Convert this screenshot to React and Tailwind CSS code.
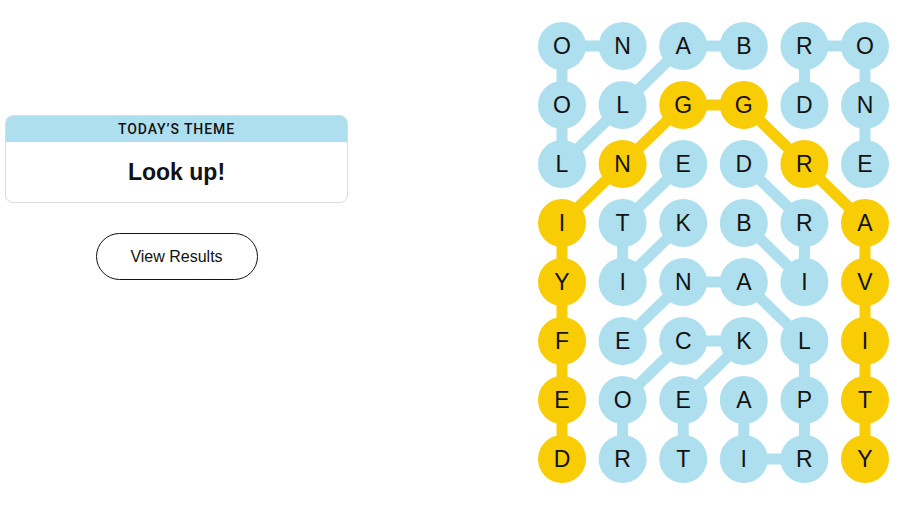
import React from 'react';

const GRID = [
  'ONABRO',
  'OLGGDN',
  'LNEDRE',
  'ITKBRA',
  'YINAIV',
  'FECKLI',
  'EOEAPT',
  'DRTIRY',
];

// words as [row, col] paths
const WORDS = [
  { path: [[0, 3], [0, 2], [1, 1], [2, 0], [1, 0], [0, 0], [0, 1]] },
  { path: [[1, 4], [0, 4], [0, 5], [1, 5], [2, 5]] },
  { path: [[3, 2], [4, 1], [3, 1], [2, 2]] },
  { path: [[3, 3], [4, 4], [3, 4], [2, 3]] },
  { path: [[6, 3], [7, 3], [7, 4], [6, 4], [5, 4], [4, 3], [4, 2], [5, 1]] },
  { path: [[7, 1], [6, 1], [5, 2], [5, 3], [6, 2], [7, 2]] },
  {
    spangram: true,
    path: [[7, 0], [6, 0], [5, 0], [4, 0], [3, 0], [2, 1], [1, 2], [1, 3], [2, 4], [3, 5], [4, 5], [5, 5], [6, 5], [7, 5]],
  },
];

const BLUE = '#aedfee';
const YELLOW = '#f8cd05';

const cx = (c) => 32 + c * 60.6;
const cy = (r) => 46 + r * 59;

function Board() {
  const fill = {};
  WORDS.forEach((w) => w.path.forEach(([r, c]) => (fill[`${r}-${c}`] = w.spangram ? YELLOW : BLUE)));

  return (
    <svg width="370" height="506" viewBox="0 0 370 506" className="shrink-0">
      {WORDS.map((w, i) => (
        <polyline
          key={i}
          points={w.path.map(([r, c]) => `${cx(c)},${cy(r)}`).join(' ')}
          fill="none"
          stroke={w.spangram ? YELLOW : BLUE}
          strokeWidth="11"
          strokeLinejoin="round"
        />
      ))}
      {GRID.map((row, r) =>
        row.split('').map((ch, c) => (
          <g key={`${r}-${c}`}>
            <circle cx={cx(c)} cy={cy(r)} r="24" fill={fill[`${r}-${c}`] || BLUE} />
            <text
              x={cx(c)}
              y={cy(r) + 8.3}
              textAnchor="middle"
              fontSize="23"
              fill="#121212"
              style={{ fontFamily: '"Liberation Sans", Arial, sans-serif' }}
            >
              {ch}
            </text>
          </g>
        ))
      )}
    </svg>
  );
}

export default function App() {
  return (
    <div className="w-[900px] h-[506px] bg-white flex overflow-hidden font-['Liberation_Sans',Arial,sans-serif] text-[#121212]">
      <div className="ml-[5px] w-[343px] pt-[115px] shrink-0 flex flex-col items-center">
        <div className="w-full h-[88px] rounded-[8px] border border-[#dcdcdc] overflow-hidden flex flex-col">
          <div className="h-[26px] bg-[#aedfee] flex items-center justify-center font-['Roboto',sans-serif] text-[14px] font-medium tracking-[0.9px] uppercase">
            Today’s Theme
          </div>
          <div className="flex-1 flex items-center justify-center text-[23px] font-bold">Look up!</div>
        </div>
        <button className="mt-[30px] w-[162px] h-[47px] rounded-full border border-[#121212] text-[16px] bg-white">
          View Results
        </button>
      </div>
      <div className="ml-[182px]">
        <Board />
      </div>
    </div>
  );
}
